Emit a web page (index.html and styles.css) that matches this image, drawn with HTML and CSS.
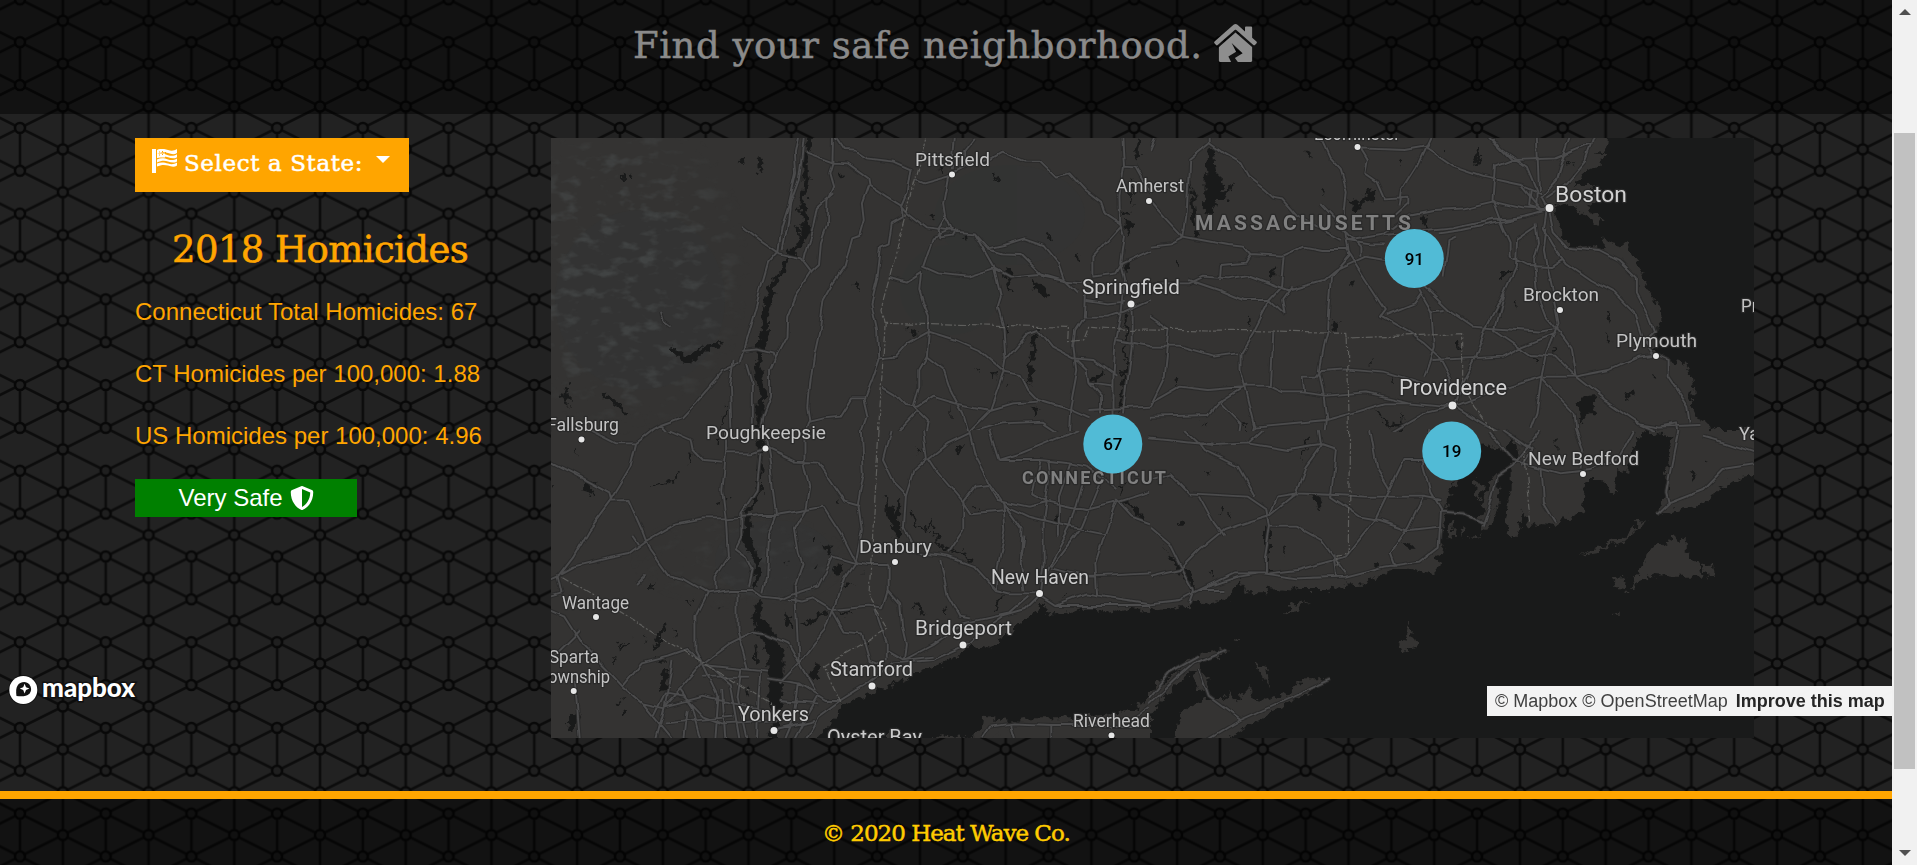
FILE: index.html
```html
<!DOCTYPE html>
<html lang="en">
<head>
<meta charset="utf-8">
<title>Find your safe neighborhood.</title>
<link rel="stylesheet" href="styles.css">
</head>
<body>
<div class="page">
  <svg class="backdrop" width="1892" height="865" aria-hidden="true">
    <defs>
      <pattern id="mesh" x="20" y="42.2" width="85.71" height="85.71" patternUnits="userSpaceOnUse">
        <rect width="86" height="86" fill="#222"/>
        <g class="mesh-line">
          <path d="M0 0V42.86M85.71 0V42.86M42.86 0V85.71"/>
          <path d="M0 0L42.86 21.43L85.71 0M0 0L42.86 -21.43L85.71 0M0 42.86L42.86 21.43L85.71 42.86M0 42.86L42.86 64.28L85.71 42.86M0 85.71L42.86 64.28L85.71 85.71"/>
        </g>
        <g class="mesh-node">
          <circle cx="0" cy="0" r="5"/><circle cx="85.71" cy="0" r="5"/><circle cx="0" cy="85.71" r="5"/><circle cx="85.71" cy="85.71" r="5"/>
          <circle cx="0" cy="42.86" r="5"/><circle cx="85.71" cy="42.86" r="5"/>
          <circle cx="42.86" cy="21.43" r="5"/><circle cx="42.86" cy="64.28" r="5"/>
        </g>
      </pattern>
    </defs>
    <rect width="1892" height="865" fill="url(#mesh)"/>
  </svg>

  <header class="header">
    <h1 class="tagline">Find your safe neighborhood.</h1>
    <svg class="house" viewBox="0 0 576 512"><path d="M288 114.96L69.47 307.71c-1.62 1.46-3.69 2.14-5.47 3.35V496c0 8.84 7.16 16 16 16h149.23L192 439.19l104.11-64-60.16-119.22L384 392.75l-104.11 64L319.81 512H496c8.84 0 16-7.16 16-16V311.1c-1.7-1.16-3.72-1.82-5.26-3.2L288 114.96zm282.69 121.32L512 184.45V48c0-8.84-7.16-16-16-16h-64c-8.84 0-16 7.16-16 16v51.69L314.75 10.31C307.12 3.45 297.56.01 288 0s-19.1 3.41-26.7 10.27L5.31 236.28c-6.57 5.91-7.12 16.02-1.21 22.6l21.4 23.82c5.9 6.57 16.02 7.12 22.6 1.21L277.42 81.63c6.05-5.33 15.12-5.33 21.17 0L527.91 283.9c6.57 5.9 16.69 5.36 22.6-1.21l21.4-23.82c5.9-6.57 5.36-16.69-1.22-22.59z"/></svg>
  </header>

  <main class="main">
    <section class="panel">
      <button class="select">
        <svg class="flag" viewBox="0 0 25 24">
          <path d="M0 0H4V24H0z"/>
          <path d="M5 1C9-1 13 0 16 1S22 2 25 0V4C22 6 19 5 16 4S9 3 5 5z"/>
          <path d="M5 6.2C9 4.200 13 5.200 16 6.200S22 7.200 25 5.200V8.200C22 10.200 19 9.200 16 8.200S9 7.200 5 9.200z"/>
          <path d="M5 10.400C9 8.400 13 9.400 16 10.400S22 11.400 25 9.400V12.400C22 14.400 19 13.400 16 12.400S9 11.400 5 13.400z"/>
          <path d="M5 14.600C9 12.600 13 13.600 16 14.600S22 15.600 25 13.600V16.600C22 18.600 19 17.600 16 16.600S9 15.600 5 17.600z"/>
          <path d="M5 4.500h8v4H5z"/>
          <path class="stars" d="M7 2.500h1v1H7zM10 2h1v1h-1zM7 5.500h1v1H7zM10 5h1v1h-1zM13 3h1v1h-1z"/>
        </svg>
        <span class="select-text">Select a State:</span>
        <span class="caret"></span>
      </button>
      <h2 class="title">2018 Homicides</h2>
      <p class="stat">Connecticut Total Homicides: 67</p>
      <p class="stat">CT Homicides per 100,000: 1.88</p>
      <p class="stat">US Homicides per 100,000: 4.96</p>
      <div class="rating">Very Safe
        <svg class="shield" viewBox="0 0 512 512"><path d="M466.5 83.7l-192-80a48.15 48.15 0 0 0-36.9 0l-192 80C27.7 91.1 16 108.6 16 128c0 198.5 114.5 335.7 221.5 380.3 11.8 4.900 25.1 4.900 36.9 0C360.1 472.6 496 349.3 496 128c0-19.4-11.7-36.9-29.5-44.3zM256.1 446.3l-.1-381 175.9 73.3c-3.300 151.4-82.1 261.1-175.8 307.7z"/></svg>
      </div>
    </section>

    <svg class="map" viewBox="551 138 1203 600">
      <defs>
        <filter id="wobble" color-interpolation-filters="sRGB" x="0" y="0" width="100%" height="100%"><feTurbulence type="fractalNoise" baseFrequency=".05" numOctaves="1" seed="4"/><feDisplacementMap in="SourceGraphic" scale="8" xChannelSelector="R" yChannelSelector="G"/></filter>
        <filter id="shore" color-interpolation-filters="sRGB" x="0" y="0" width="100%" height="100%"><feTurbulence type="fractalNoise" baseFrequency=".13" numOctaves="3" seed="9"/><feDisplacementMap in="SourceGraphic" scale="13" xChannelSelector="R" yChannelSelector="G"/></filter>
        <filter id="relief" color-interpolation-filters="sRGB" x="0" y="0" width="100%" height="100%"><feTurbulence type="fractalNoise" baseFrequency=".05 .09" numOctaves="3" seed="12"/><feColorMatrix values="0 0 0 0 .26  0 0 0 0 .27  0 0 0 0 .27  4 0 0 0 -2.1"/><feComposite in2="SourceGraphic" operator="in"/></filter>
        <radialGradient id="hills"><stop offset="0" stop-color="#fff"/><stop offset=".7" stop-color="#fff" stop-opacity=".7"/><stop offset="1" stop-color="#fff" stop-opacity="0"/></radialGradient>
      </defs>
      <rect x="551" y="138" width="1203" height="600" fill="#343332"/>
      <g fill="#313534" opacity=".4"><ellipse cx="640" cy="300" rx="85" ry="90"/><ellipse cx="1010" cy="215" rx="75" ry="50"/><ellipse cx="950" cy="290" rx="50" ry="45"/><ellipse cx="775" cy="560" rx="60" ry="40"/></g>
      <g filter="url(#relief)"><ellipse cx="625" cy="270" rx="125" ry="165" fill="url(#hills)"/><ellipse cx="740" cy="560" rx="110" ry="50" fill="url(#hills)" opacity=".4"/></g>

      <g filter="url(#shore)">
        <svg x="550" y="130" width="600" height="300" viewBox="0 0 1568 900" preserveAspectRatio="none">
          <g class="water">
            <path d="M676 20L690 24 676 70 676 140 667 220 678 300 664 345 626 385 623 415 598 450 582 500 572 560 572 600 558 660 552 720 565 780 556 840 556 900 542 900 542 840 545 780 534 720 541 660 554 600 553 560 564 500 582 450 610 415 612 385 646 345 658 300 652 220 663 140 660 70z"/>
            <path d="M317 640L330 660 355 680 375 670 400 645 445 635 447 655 410 660 385 690 345 705 335 685 320 675zM490 100l12-15 5 18zM535 85l12-10 15 30-8 22-8-18zM185 130l8 8 0 18-6 0zM202 135l14-4-5 18zM755 122l8 0 2 25-7-3zM792 465l10-5 8 22zM645 290l8-6 0 36-7-5zM992 255l12-5-3 22-7-3zM1160 130l6-6 8 24-6 4zM1015 120l10-8 3 12zM1300 315l6-3 6 25-6-5zM1372 375l8-7 8 25-7 2zM1080 325l12-15 3 6-12 16zM1188 415l12-3 0 40 10 30-12 3-8-45zM1268 455l20 15 16 30-12 3-25-30zM935 600l15-8 8 10-10 18zM900 682l12-3-2 8zM1112 715l8 3-3 18zM1158 720l8 2-5 30-5 0zM1258 830l15 0-5 25-8-3zM1045 830l5 28-6-3zM1270 600l8 0-5 40-12 30 0 60-8 35-4-40 8-85zM1192 755l8 5-3 12zM40 765l18-3-12 25 0 35 10 8-15-3-8-30zM135 790l15-2 20 25 40 38-10 2-35-30zM1190 590l8 3-3 25zM1410 745l30-20 8 12-25 20zM1520 150l4 0-2 80-4 0zM1535 24l8 5-5 50-6 25-3-45zM1490 245l25 0-3 8-20 5zM1505 270l18 5-13 35-6-5zM1508 390l8 5-4 25-10-5zM1505 560l8 0-8 170-14 110-9 15 8-60 10-80zM460 830l6 5-12 50-8 15z"/>
          </g>
        </svg>
        <svg x="1150" y="130" width="617" height="300" viewBox="0 0 1261 900" preserveAspectRatio="none">
          <g class="water">
            <path d="M936 -20L932 60 912 70 935 75 910 110 885 130 870 150 862 180 880 165 905 165 900 185 915 200 900 225 890 235 905 250 925 265 915 280 890 260 880 240 850 215 830 230 828 270 845 300 838 320 860 345 870 355 900 350 925 355 925 330 950 340 975 350 985 375 1000 400 1008 440 1025 500 1045 540 1045 570 1035 590 1035 620 1030 660 1060 690 1090 700 1105 730 1110 780 1105 830 1125 870 1160 900 1261 930 1261 -20z"/>
            <path d="M122 50L130 55 135 130 150 150 145 190 170 160 155 210 135 210 125 255 110 250 112 140 115 100zM78 140L90 200 95 260 104 320 90 310 82 200zM405 205L430 215 440 185 460 180 460 210 435 225 422 250 412 225zM322 65l8 0 0 20-6-3zM510 88l8-5-2 20zM598 62l8-8-4 16zM354 180l6 0-3 20zM560 255l8 10-5 35-8-10zM203 350l7 15-8 5zM50 395l7-10 0 28zM248 410l10-5-3 45-8-10zM408 450l8-5 0 20-6 3zM735 420l-20 0 3 25zM745 515l6-3 0 20zM935 555l8-5-3 25zM708 535l10-10-2 35-10-8zM373 570l10 5-2 35-8-10zM202 560l6 5-4 30zM622 635l8-8 5 15-8 14zM928 615l15 15-5 8zM50 745l6 5-3 28zM495 735l8 5-4 28zM455 685l0 25-5-5zM785 685l12-3-7 28zM820 650l8 5-5 20zM1028 738l10-5 0 12zM970 790l18-6 4 14-14 6zM880 800L910 795 908 850 895 850 880 885 875 840zM455 835L475 860 490 880 514 885 516 840 520 910 490 890zM105 880l12-3 2 10zM190 880l6 0 0 25zM865 90l-20 5 10 12zM670 55l5 0-5 50-10 5z"/>
          </g>
        </svg>
        <svg x="550" y="430" width="600" height="320" viewBox="0 0 1568 960" preserveAspectRatio="none">
          <g class="water">
            <path d="M542 -10L557 -10 550 200 525 240 522 330 545 380 552 400 542 470 535 480 526 470 540 400 503 340 510 250 545 180zM545 505L558 520 547 560 592 610 610 650 610 745 603 850 597 960 575 960 573 740 568 670 538 600 528 560z"/>
            <path d="M690 960L700 920 750 865 765 825 800 805 830 795 870 775 920 750 960 730 1020 700 1070 670 1090 650 1130 655 1150 660 1160 640 1200 610 1240 570 1275 545 1283 515 1295 520 1295 555 1340 550 1400 535 1450 550 1500 535 1578 545V800L1530 835 1450 855 1320 865 1250 865 1200 878 1175 865 1135 860 1130 900 1100 925 1020 915 960 960z"/>
            <path d="M875 200L895 230 905 260 908 200 915 210 915 330 893 320 897 290 882 255zM300 585l4 20-30 55-8-5zM360 515l12-5-4 20zM205 625l5 5-22 30-6-3zM183 635l5 2-10 25zM245 625l4 0-5 25zM322 595l8 5-3 20zM265 470l15-10-12 18zM433 225l12-5-3 16zM460 195l6 0 0 22zM5 165l8 3-5 12zM85 180l12-30 25 5-15 10 12 30-15-8zM62 55l6 0-2 22zM622 385l-5 22-3-10zM690 315l6 15-6 0zM710 345l20 10 5-12-3 30-8 0zM740 410l28-5-8 30-12-5zM765 465l30-3-22 10zM755 205l3 20-6-3zM810 425l8 8-7 0zM690 412l15-12-8 22zM615 545l15 15 0 30-15-15zM650 580l20 2 50-45 10 3-55 52zM755 540l20 3 15 10-15 0zM690 700l15 5-5 40-25 0zM535 650l10-5-3 60-6-5zM285 685l12-3 0 20-8-3zM300 720l15 0-15 60-18 5zM50 860l20-10 5 15-20 45-12-5zM195 800l-30 20 8 5zM185 850l15-10-5 22-10 5zM165 685l8 0-8 25zM510 780l10 5-5 22zM950 520l15 10 15 25-12-3zM1035 520l-3 35 8-8zM1160 520l18-25-5 35-10 15zM1340 490l5 0-7 20zM1058 55l20-10-10 25-8-3zM955 50l18 15-10 5zM1115 230l5 15-8 0zM1325 255l5 25-8-3zM1480 215l50 5 15 35 0 25-20-50-45-10zM1490 170l12-5-15 45zM830 630l8 15-6 0zM445 535l5-10-2 20z"/>
            <path class="creek" d="M940 235L955 280 985 300 1000 270 998 310 1015 320 1015 345 1080 370 1100 400M265 175L300 160 335 135M365 65L360 105M430 40L440 20"/>
          </g>
        </svg>
        <svg x="1150" y="430" width="617" height="320" viewBox="0 0 1261 960" preserveAspectRatio="none">
          <g class="water">
            <path d="M-20 545L80 530 90 515 110 520 165 505 185 445 195 490 235 490 240 470 300 480 365 480 400 465 440 460 480 430 520 415 578 430 595 370 598 350 600 270 610 200 625 150 680 40 720 60 745 20 752 70 735 130 735 190 725 280 742 325 755 305 762 240 775 290 800 280 830 285 850 265 885 240 890 150 920 150 950 190 955 120 975 130 990 40 1010 0 1068 20 1055 130 1060 180 1035 255 1075 240 1140 220 1160 180 1200 145 1261 125V960H-20z"/>
            <path d="M18 310L35 370 60 400 80 430 98 470 85 475 60 430 45 400zM235 290l8 0 0 140-6 0zM332 200l15 0 5 20-10 20zM145 225l10 8-12 18zM112 122l12 5-3 12zM518 340l18-3-2 22-10 0zM275 345l5 10-6 25zM458 402l10 0-3 12zM118 430l10-5-5 22zM55 275l20 0-5 18-12 0zM1105 130l12 0-5 18zM1135 95l5 0-2 12zM828 35l5 0 0 20zM160 255l4 0-2 20zM315 30l12-5-10 30-6 50z"/>
          </g>
          <g class="land">
            <path d="M-10 800L30 750 80 690 100 672 158 652 158 665 110 690 80 730 30 800 -10 870zM40 960L60 860 85 825 115 810 150 810 165 780 175 820 203 772 218 818 290 785 318 745 370 745 340 775 250 845 120 960zM95 700L120 750 110 790 90 760zM215 700L240 715 243 765 225 730zM273 550L290 525 330 512 300 535zM172 640l14-15-5 18zM530 580L537 600 535 620 545 655 515 665 508 640 525 620zM980 475L1000 420 1030 350 1058 340 1070 305 1078 345 1095 320 1095 370 1125 400 1130 440 1070 440 1030 435 995 460zM1130 405L1150 400 1155 440 1140 440zM942 445L972 440 968 475 955 470zM880 375L905 355 930 345 940 335 965 325 1000 270 1015 265 985 310 965 335 920 365zM948 545l12 0 0 6-12 0zM968 488l10 0-4 8zM665 140L680 170 674 215 662 190zM690 160L708 130 715 200 700 290 680 300 675 270zM612 270l10 5-5 55-7-5zM635 290l8 10-3 30zM650 320l30-5-25 15z"/>
          </g>
        </svg>
        <path class="land" d="M885 737l0-6 10-3 5 9zM1000 728l20 5 0 8-30 0z"/>
      </g>

      <g filter="url(#wobble)">
        <svg x="550" y="130" width="600" height="300" viewBox="0 0 1568 900" preserveAspectRatio="none">
          <path id="roads-nw" class="casing" d="M652 0L640 70 643 130 625 220 605 290 597 365 570 400 545 500 520 600 505 660 495 700 455 720 380 820 345 862 290 885 245 915M665 0L658 80 650 150 628 220 620 290 608 360M668 68L740 98 778 100 832 145 835 165 880 200 915 225 935 250 985 295 1050 305 1110 310 1145 355 1185 345 1240 325 1290 345 1330 400 1345 450 1380 490M740 0L738 98 730 130 740 170 725 210 724 290 708 340 703 405 680 430 640 500 620 560 618 620 590 680 575 720 575 800 555 860 548 920M740 190L700 230 690 290 668 370 662 400M832 165L815 220 820 270 808 318 790 325 770 410 740 460 715 510 705 600 690 680 680 760 675 830 680 870 665 920M740 10L770 60 800 62 830 85 900 95 945 118 935 190 920 230 925 260 893 280 885 340 865 350 855 450 840 520 855 600 858 690 840 750 820 810 830 860 812 920M955 150L975 160 1040 140 1085 105 1150 85 1180 65 1240 95 1280 95 1320 140 1360 130 1400 180 1440 215 1450 250 1490 280M1060 0L1050 120M1110 24L1085 60 1085 110 1050 130 1042 145 1030 220 1035 260 1015 300 1020 325 1050 320 1060 300M1030 255L1050 300 1000 325 975 410 1015 430 1090 440 1160 415 1200 440 1280 432 1350 455 1390 460M885 440L930 455 970 425 965 480 975 520 990 560 990 605 985 680 1030 720 1050 790 1080 850 1095 910M1110 310L1160 410 1178 500 1170 530 1185 590 1190 690 1185 725 1150 840 1090 910M1145 358L1180 370 1230 372 1290 440 1350 455M858 685L905 680 935 640 990 605 1060 630 1120 660 1185 725 1230 735 1250 780 1275 810 1360 840 1410 865M985 680L965 720 965 770 950 830 985 870 975 930M820 805L790 805 760 860 715 865 680 875M870 770L900 790 930 825 960 830 1000 800 1060 820 1150 840 1210 820 1275 815M960 845L890 930M505 290L550 330 600 370 655 385 685 430M500 660L545 655 585 668 590 690M480 690L470 760 475 930M515 700L530 760 530 930M1190 690L1220 650 1250 610 1275 600 1310 650 1370 685 1420 690 1480 740M1495 0L1500 110 1488 200 1490 280 1500 320 1490 400 1500 450 1490 560 1475 640 1470 740 1470 850M1500 110L1530 112 1568 190M1490 290L1420 380 1420 440 1480 430 1495 400 1568 360M1398 490L1395 560 1460 560 1500 545 1568 510M1395 565L1375 600 1370 650 1378 720 1360 830 1355 930M1400 510L1460 520 1500 515M1378 690L1405 720 1410 760 1440 800 1440 850M1480 630L1568 648M1410 840L1568 830M1090 910L1180 880 1290 875 1350 920M290 545L297 575 315 590M1520 540L1520 650 1500 850M1410 760L1470 770M290 885L310 910"/>
          <use href="#roads-nw" class="core"/>
          <path class="border" d="M990 0L865 535 873 577 1360 592 1358 635 1392 630 1405 592 1505 598 1578 597M876 577L858 910"/>
        </svg>
        <svg x="1150" y="130" width="617" height="300" viewBox="0 0 1261 900" preserveAspectRatio="none">
          <path id="roads-ne" class="casing" d="M122 24L122 40 150 70 185 100 200 140 235 180 250 200 270 205 300 255 340 290 390 330M122 40L80 90 78 160 75 250 68 320 40 340 0 347M340 0L365 80 390 120 402 180 398 250 403 330M432 55L520 60 560 50 620 110 680 140 760 165 800 190M580 0L545 110 515 180 510 230M430 55L445 90 440 130 465 155 480 205 530 200 530 220 500 260M700 24L720 60 770 110 790 180 790 240M790 0L795 180M680 0L740 90 830 85 905 40M865 0L840 100 830 150 800 200 815 240M910 10L890 90 850 160 810 200M740 90L705 110 700 210 720 290 735 340 735 380 770 405 820 408 845 385M815 240L760 235 700 215 640 235 580 240 530 255 480 310 400 330M815 240L770 260 700 270 620 295 480 315M810 245L720 275 640 300 590 310M815 240L825 310 850 350 920 360 960 390 995 440 995 490 1020 560 1030 600 1010 630M810 250L805 300 825 350 850 400 900 450 950 490 990 550 1005 620 1030 670 1060 690 1060 740 1100 830 1105 880M790 280L795 340 785 390 790 480 810 560 845 620 860 650M790 290L750 330 748 410 720 500 685 600 665 680 640 750 625 820M810 300L805 360 815 440 830 540 835 580 810 670 800 740 790 850 770 930M725 490L705 600 745 640 780 675 830 680 870 740 930 810 1000 880 1080 930M0 460L80 460 110 440 160 445 200 435 280 480 355 450 380 420 440 380 480 390M68 320L160 345 190 350 205 375 270 380 315 350 350 360 400 360 410 380 440 450 480 540 470 560 530 610 560 640 590 680 615 750 620 800M205 375L195 398 145 405 143 450M400 330L405 380 370 440 365 520 362 600 355 640 345 720 355 800 360 860 355 930M80 450L140 480 190 510 245 510 275 550 270 510 290 470M245 510L210 610 185 670 185 720 200 800 215 890 205 930M250 605L245 770M0 650L60 650 130 680 180 670M0 820L60 770 120 780 200 770 240 770 270 790 310 790 360 800 440 790 530 820 600 830 620 825M0 860L120 855 140 820 200 765M145 820L185 880 180 930M315 790L312 740 340 740 350 720 400 715 480 725 560 760 600 790M480 555L540 520 555 490M550 480L570 530 575 545 600 540M560 470L610 540 660 590 750 600 800 605 835 595M575 540L580 650 570 700 560 740M575 690L650 685 720 680 760 650 830 610M620 830L690 790 800 740 870 740 940 720 1000 680 1030 675M870 740L860 650M620 825L680 880 740 930M620 830L560 850 500 900 480 930M215 890L360 870 410 850 480 820 530 820M800 745L870 850 875 930M1000 880L1040 890 1075 880 1080 930M1040 890L1125 885M403 330L450 340 480 340M350 225L430 350 430 380M275 380L270 470 245 510M625 320L610 330 600 440M0 60L10 24M0 210L30 260 68 320M0 560L40 600 30 740 0 830M760 170L800 240M778 175L775 230 815 250"/>
          <use href="#roads-ne" class="core"/>
          <path class="border" d="M0 597L402 607 403 624 637 611 637 745 660 830 710 920M403 624L408 930"/>
        </svg>
        <svg x="550" y="430" width="600" height="320" viewBox="0 0 1568 960" preserveAspectRatio="none">
          <path id="roads-sw" class="casing" d="M280 -10L225 40 210 110 155 215 100 300 60 380 20 440 0 450M100 0L170 40 225 40M0 95L60 130 155 190 160 212 205 210 240 300 260 360 310 440 350 450 410 490 470 480 530 480 555 500 640 510 660 515M20 435L60 410 150 385 205 372 255 330 330 280 400 265 460 265 550 255 590 255 670 240 715 230 760 310 800 400 830 405 885 405M310 0L370 30 375 60 400 90 450 95M460 70L450 180 460 270 465 380 430 440 430 480M460 0L460 70 530 70 565 55 640 95 700 98 770 215 810 228M550 70L540 180 500 250 500 320 485 355 515 380 530 420 520 470M560 0L575 100 590 250 570 310 565 440 555 490M665 0L665 100 680 170 670 240 640 300 650 370 660 400 640 470 645 580 650 700 690 780M815 0L820 130 805 220 815 300 800 390 770 440 740 540 720 600 690 640 650 700 600 760M890 0L870 90 900 160 930 195 925 290 960 370 1010 375M975 0L985 85 950 120 930 195M1095 10L1040 40 990 85 1010 120 1080 215 1080 300 1040 370M800 400L740 380 700 470 640 490 600 510M660 515L690 505 740 540 830 530 870 535 885 480 885 405M885 480L915 520 920 590 930 640 925 690M740 545L770 605 815 610 835 690 860 700M850 540L880 640 880 690M760 810L830 760 900 700 1000 690 1080 650 1130 600 1180 560 1240 540 1280 495 1320 525 1400 490 1450 500 1568 520M925 690L1000 645 1080 580 1160 560 1200 550 1250 500M1320 525L1568 525M880 660L925 690 1000 680M1010 375L1040 380 1110 410 1165 480 1200 490 1280 490M1020 390L1040 500 1070 560 1100 565M1175 90L1280 90 1360 100 1400 110M1095 0L1110 70 1150 160 1185 220 1235 300 1230 400 1240 480M1150 170L1170 210 1250 230 1300 215 1400 240 1470 220 1568 185M1185 220L1190 300 1170 410 1165 480M1300 90L1305 140 1290 260 1290 400 1280 490M1400 130L1360 290 1300 420M1440 150L1390 290 1310 410M1175 90L1150 0M1175 90L1230 70 1380 0M1480 210L1520 260 1568 280M1480 215L1450 310 1425 400 1430 500M1190 240L1100 250 1080 215 1110 170 1150 165M1360 290L1450 310M1240 320L1230 400M1310 415L1400 440 1568 430M1185 225L1250 260 1360 290M1280 90L1260 190 1300 215M1360 100L1330 200 1330 320M1400 110L1480 180M410 490L380 560 380 660 400 705 570 725M490 490L490 600 520 720M400 700L340 780 300 830M400 700L470 640 530 605 560 610 620 640 650 700M570 745L650 760 720 810 760 810M0 540L40 560 90 650 150 720 190 770 240 820 300 835M80 600L0 690M190 770L240 700 310 680 360 660 400 700M65 750L80 960M300 830L400 800 480 820 570 840M300 830L270 960M340 780L370 830 400 960M400 705L440 800 430 960M410 700L470 760 500 960M500 720L490 800 520 960M650 760L640 850 600 960M700 790L670 850 620 960M760 810L700 860 650 960M550 720L545 800 540 960M240 820L340 960M300 880L480 860M350 800L400 860 450 880 600 870M320 690L300 830M400 740L520 740M270 860L300 790 350 800M360 840L350 940M450 780L460 960M600 810L700 820M580 900L690 870M1110 960L1150 890 1210 880 1310 885 1390 885 1568 890M1200 885L1220 960M1310 885L1310 960M20 440L30 490 0 500M1520 870L1568 830M215 320L230 345M225 465L255 430"/>
          <use href="#roads-sw" class="core"/>
          <path class="border" d="M860 0L833 505 882 595 715 710 760 815M30 440L580 823"/>
        </svg>
        <svg x="1150" y="430" width="617" height="320" viewBox="0 0 1261 960" preserveAspectRatio="none">
          <path id="roads-se" class="casing" d="M0 150L40 130 80 190 200 200 240 240 245 290 235 380 235 430M100 200L130 280 150 320M0 440L60 420 100 360 150 300 200 275 245 255 300 190 380 195 440 200 560 200 595 210M130 40L100 40 110 60 180 110 215 200M0 25L130 45 200 40 230 0M345 0L350 50 320 110 300 190 260 200 245 255M200 40L280 60 350 45 380 60M0 290L40 340 60 400 90 480M0 520L60 510 100 480 170 430 230 430 300 445 400 440 480 410 550 395 590 350 595 240 575 190 560 100 575 0M245 290L300 290 350 330 400 430M100 480L180 440 220 430M380 60L370 200 430 260 470 270 530 300 590 290M450 0L465 120 490 180 460 270 400 380 300 420 240 430M490 180L520 90 560 90M530 290L490 370 500 410M100 40L70 0M800 0L740 110 710 140 700 200 680 290M595 245L640 250 680 280M690 0L740 90 840 130 900 120 960 80 990 0M800 110L805 220 830 280M1080 0L1065 110 1055 190 1060 220 1035 255M1060 220L1130 180 1170 120 1261 100M1130 20L1180 40 1261 80M870 0L885 60 880 115M100 480L150 480M90 480L80 520M560 200L530 290M0 820L50 750 90 700 155 660M0 800L40 730 100 680M100 720L120 800 185 870 300 795 370 748M185 870L80 960M720 0L780 60 760 110M375 370L380 440"/>
          <use href="#roads-se" class="core"/>
          <path class="border" d="M408 0L405 370 380 375 385 410M765 60L780 280"/>
        </svg>
      </g>

      <g class="dots">
        <circle cx="952" cy="174.500" r="3"/><circle cx="1149" cy="201" r="3"/><circle cx="1357.500" cy="147" r="3"/><circle cx="1549.500" cy="208" r="4"/><circle cx="1131" cy="304" r="3.500"/><circle cx="1560" cy="310" r="3"/><circle cx="1656" cy="356" r="3"/><circle cx="1452.500" cy="405.500" r="4"/><circle cx="581.500" cy="439.500" r="3"/><circle cx="765.500" cy="448.500" r="3"/><circle cx="1583" cy="474" r="3"/><circle cx="895" cy="562" r="3"/><circle cx="1039.500" cy="593.500" r="3.500"/><circle cx="963" cy="645" r="3.500"/><circle cx="872" cy="686" r="3.500"/><circle cx="596" cy="617" r="3"/><circle cx="573.700" cy="691" r="3"/><circle cx="774" cy="730.500" r="3.500"/><circle cx="1111.500" cy="735.500" r="3"/>
      </g>
      <g class="places">
        <text x="915" y="165.500" textLength="75" lengthAdjust="spacingAndGlyphs">Pittsfield</text>
        <text x="1116" y="192" textLength="68" lengthAdjust="spacingAndGlyphs">Amherst</text>
        <text x="1314" y="139.500" textLength="86" lengthAdjust="spacingAndGlyphs">Leominster</text>
        <text class="city" x="1555" y="201.500" textLength="72" lengthAdjust="spacingAndGlyphs">Boston</text>
        <text class="town" x="1082" y="294" textLength="98" lengthAdjust="spacingAndGlyphs">Springfield</text>
        <text x="1523" y="301" textLength="76" lengthAdjust="spacingAndGlyphs">Brockton</text>
        <text x="1616" y="347" textLength="81" lengthAdjust="spacingAndGlyphs">Plymouth</text>
        <text x="1741" y="312" textLength="103" lengthAdjust="spacingAndGlyphs">Provincetown</text>
        <text class="city" x="1399" y="395" textLength="108" lengthAdjust="spacingAndGlyphs">Providence</text>
        <text x="1739" y="440" textLength="78" lengthAdjust="spacingAndGlyphs">Yarmouth</text>
        <text x="547" y="431" textLength="72" lengthAdjust="spacingAndGlyphs">Fallsburg</text>
        <text x="706" y="439" textLength="120" lengthAdjust="spacingAndGlyphs">Poughkeepsie</text>
        <text x="1528" y="465" textLength="111" lengthAdjust="spacingAndGlyphs">New Bedford</text>
        <text x="859" y="553" textLength="73" lengthAdjust="spacingAndGlyphs">Danbury</text>
        <text class="town" x="991" y="584" textLength="98" lengthAdjust="spacingAndGlyphs">New Haven</text>
        <text class="town" x="915" y="635" textLength="97" lengthAdjust="spacingAndGlyphs">Bridgeport</text>
        <text class="town" x="830" y="676" textLength="83" lengthAdjust="spacingAndGlyphs">Stamford</text>
        <text x="562" y="609" textLength="67" lengthAdjust="spacingAndGlyphs">Wantage</text>
        <text x="549" y="663" textLength="50" lengthAdjust="spacingAndGlyphs">Sparta</text>
        <text x="539" y="683" textLength="71" lengthAdjust="spacingAndGlyphs">Township</text>
        <text class="town" x="738" y="721" textLength="71" lengthAdjust="spacingAndGlyphs">Yonkers</text>
        <text class="town" x="827" y="744" textLength="95" lengthAdjust="spacingAndGlyphs">Oyster Bay</text>
        <text x="1073" y="727" textLength="77" lengthAdjust="spacingAndGlyphs">Riverhead</text>
        <text class="state" x="1195" y="229.500" textLength="216" font-size="21">MASSACHUSETTS</text>
        <text class="state" x="1022" y="484" textLength="144" font-size="18">CONNECTICUT</text>
      </g>
      <g class="clusters">
        <circle cx="1414.300" cy="258.500" r="29.500"/><circle cx="1112.800" cy="444" r="29.500"/><circle cx="1451.700" cy="451" r="29.500"/>
        <text x="1414.300" y="264.500">91</text><text x="1112.800" y="450">67</text><text x="1451.700" y="457">19</text>
      </g>
    </svg>

    <svg class="logo" width="140" height="36" viewBox="0 0 140 36">
      <circle cx="23.300" cy="18" r="15" fill="#000" opacity=".45"/>
      <circle cx="23.300" cy="18" r="14" fill="#fff"/>
      <path d="M16.500 24C15 15 18 10 24.500 10A7.200 7.200 0 0 1 29.600 21.500C26 25 21 24.500 16.500 24z" fill="#111"/>
      <path d="M24.600 11.800L26 15.200 29.400 16.600 26 18 24.600 21.400 23.200 18 19.800 16.600 23.200 15.200z" fill="#fff"/>
      <text x="42" y="25" textLength="93" lengthAdjust="spacingAndGlyphs">mapbox</text>
    </svg>
    <div class="attribution"><span>© Mapbox</span> <span>© OpenStreetMap</span> <b>Improve this map</b></div>
  </main>

  <footer class="footer"><span class="copyright">© 2020 Heat Wave Co.</span></footer>
</div>
<div class="scrollbar">
  <span class="arrow up"></span>
  <span class="thumb"></span>
  <span class="arrow down"></span>
</div>
</body>
</html>
```
FILE: styles.css
```css
* { box-sizing: border-box; }
body { margin: 0; display: flex; width: 1917px; height: 865px; overflow: hidden; background: #222; font-family: "Liberation Sans", Arial, sans-serif; }
.page { position: relative; z-index: 0; width: 1892px; height: 865px; display: flex; flex-direction: column; }
.backdrop { position: absolute; left: 0; top: 0; z-index: -1; }
.mesh-line { fill: none; stroke: #0c0c0c; stroke-width: 2.7; }
.mesh-node { fill: #1f1f1f; stroke: #080808; stroke-width: 2.6; }

.header { height: 114px; background: rgba(0, 0, 0, .46); display: flex; padding: 24px 0 0 633px; }
.tagline { margin: 1px 0 0; width: 581px; font: 400 37px/42px "DejaVu Serif", serif; color: #8a8a8a; white-space: nowrap; letter-spacing: .55px; -webkit-text-stroke: .5px #8a8a8a; }
.house { width: 43px; height: 38px; fill: #8e8e8e; }

.main { position: relative; height: 677px; padding: 24px 0 0 135px; display: flex; }
.panel { width: 416px; color: orange; }
.select { display: flex; width: 274px; height: 54px; padding: 11px 17px 0; border: 0; background: orange; color: #fff; font: 400 23px/26px "DejaVu Serif", serif; }
.flag { width: 25px; height: 24px; margin-right: 7px; fill: #fff; }
.stars { fill: orange; }
.select-text { width: 192px; text-align: left; white-space: nowrap; margin-top: 1px; letter-spacing: .6px; -webkit-text-stroke: .5px #fff; }
.caret { margin-top: 7px; border: 7px solid transparent; border-top-color: #fff; border-bottom: 0; height: 7px; }
.title { margin: 34px 0 0 37px; font: 400 37px/48px "DejaVu Serif", serif; white-space: nowrap; letter-spacing: -.6px; -webkit-text-stroke: .6px orange; }
.stat { margin: 0; height: 62px; font-size: 24px; line-height: 36px; }
.title + .stat { margin-top: 20px; }
.rating { display: flex; align-items: center; justify-content: center; gap: 7px; width: 222px; height: 38px; background: green; color: #fff; font-size: 24px; margin-top: -1px; }
.shield { width: 24px; height: 24px; fill: #fff; }

.map { width: 1203px; height: 600px; display: block; }
.map svg { stroke: #2a2a2a; stroke-width: 4px; }
.casing { fill: none; vector-effect: non-scaling-stroke; stroke-linejoin: round; }
.map .core { stroke: #4b4b4c; stroke-width: 1.9px; }
.water { fill: #191a1a; stroke: none; }
.land { fill: #343332; stroke: none; }
.creek { fill: none; stroke: #191a1a; stroke-width: 2px; vector-effect: non-scaling-stroke; }
.border { fill: none; stroke: #5e5e5c; stroke-width: 1.2px; stroke-dasharray: 7 2 2 2; vector-effect: non-scaling-stroke; }
.dots { fill: #e6e6e6; stroke: #222; stroke-width: 1.5; paint-order: stroke; }
.places { font: 400 18px Roboto, sans-serif; fill: #c3c3c3; stroke: #292929; stroke-width: 2.5px; paint-order: stroke; stroke-linejoin: round; }
.places .town { font-size: 19.5px; fill: #cbcbcb; }
.places .city { font-size: 22px; fill: #d2d2d2; }
.places .state { font-weight: 700; fill: #808080; }
.clusters { fill: #51bbd6; font: 500 17px Roboto, sans-serif; text-anchor: middle; }
.clusters text { fill: #000; }

.logo { position: absolute; left: 0; top: 558px; }
.logo text { font: 900 26px Lato, sans-serif; fill: #fff; stroke: #111; stroke-width: 3px; paint-order: stroke; }
.attribution { position: absolute; right: 0; top: 572px; width: 405px; height: 30px; padding-left: 8px; background: rgba(255, 255, 255, .95); color: #404040; font-size: 18px; line-height: 30px; white-space: nowrap; }
.attribution b { margin-left: 3px; color: #262626; }

.footer { flex: 1; border-top: 8px solid orange; background: rgba(0, 0, 0, .46); background-clip: padding-box; padding: 19px 0 0 822px; }
.copyright { font: 400 23px/30px "DejaVu Serif", serif; color: #fc0; white-space: nowrap; letter-spacing: -1px; -webkit-text-stroke: .5px #fc0; }

.scrollbar { width: 25px; height: 865px; background: #f1f1f1; display: flex; flex-direction: column; align-items: center; padding: 9px 0 9px; }
.arrow { border: 6px solid transparent; height: 6px; }
.up { border-bottom-color: #505050; border-top: 0; }
.down { border-top-color: #505050; border-bottom: 0; margin-top: auto; }
.thumb { width: 21px; height: 636px; margin-top: 118px; background: #c1c1c1; }
```
